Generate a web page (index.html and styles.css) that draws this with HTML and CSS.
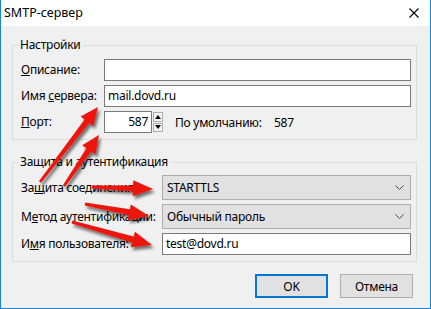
FILE: index.html
```html
<!DOCTYPE html>
<html lang="ru">

<head>
    <meta charset="utf-8">
    <title>SMTP-сервер</title>
    <link rel="stylesheet" href="styles.css">
</head>

<body>
    <div class="window">
        <!--TITELLINJE-->
        <div class="titlebar">
            <span class="title">SMTP-сервер</span>
            <svg class="close" width="10" height="10" viewBox="0 0 10 10">
                <path d="M0.5 0.5 L9.5 9.5 M9.5 0.5 L0.5 9.5" stroke="#000" stroke-width="1.1" fill="none" />
            </svg>
        </div>

        <div class="content">
            <fieldset class="group group-settings">
                <legend>Настройки</legend>
                <div class="row">
                    <label><u>О</u>писание:</label>
                    <div class="input"></div>
                </div>
                <div class="row">
                    <label>Имя <u>с</u>ервера:</label>
                    <div class="input">mail.dovd.ru</div>
                </div>
                <div class="row">
                    <label><u>П</u>орт:</label>
                    <div class="input port">587</div>
                    <div class="spin">
                        <span class="spin-btn"><i class="tri up"></i></span>
                        <span class="spin-btn"><i class="tri down"></i></span>
                    </div>
                    <span class="default-label">По умолчанию:</span>
                    <span>587</span>
                </div>
            </fieldset>

            <fieldset class="group group-security">
                <legend>Защита и аутентификация</legend>
                <div class="row row-select">
                    <label>За<u>щ</u>ита соединения:</label>
                    <div class="select">STARTTLS
                        <svg class="chevron" width="9" height="5" viewBox="0 0 9 5">
                            <path d="M0.5 0.5 L4.5 4.5 L8.5 0.5" stroke="#444" fill="none" />
                        </svg>
                    </div>
                </div>
                <div class="row row-select">
                    <label>М<u>е</u>тод аутентификации:</label>
                    <div class="select">Обычный пароль
                        <svg class="chevron" width="9" height="5" viewBox="0 0 9 5">
                            <path d="M0.5 0.5 L4.5 4.5 L8.5 0.5" stroke="#444" fill="none" />
                        </svg>
                    </div>
                </div>
                <div class="row">
                    <label>И<u>м</u>я пользователя:</label>
                    <div class="input">test@dovd.ru</div>
                </div>
            </fieldset>

            <div class="buttons">
                <button class="btn btn-default">OK</button>
                <button class="btn">Отмена</button>
            </div>
        </div>

        <!--ROEDE PILE OVENPAA DIALOGEN-->
        <svg class="arrows" width="431" height="309" viewBox="0 0 431 309">
            <defs>
                <filter id="skygge" x="-20%" y="-20%" width="140%" height="140%">
                    <feDropShadow dx="2" dy="3" stdDeviation="1.8" flood-color="#000" flood-opacity="0.55" />
                </filter>
            </defs>
            <g fill="#ec1410" filter="url(#skygge)">
                <polygon points="38.9,181.2 84.6,119.4 80.6,116.4 98,107 93.3,126.1 89.3,123.1 41.1,182.8" />
                <polygon points="62.9,185.2 86.4,148.2 82.2,145.3 99,135 95.4,154.4 91.2,151.5 65.1,186.8" />
                <polygon points="92,185.6 133.1,185.4 133.2,180.3 153,189 132.8,196.3 132.9,191.3 92,188.4" />
                <polygon points="85.3,202.6 129.9,209.3 130.8,204.4 149,216 127.9,220.2 128.8,215.3 84.7,205.4" />
                <polygon points="72.4,220.6 133.6,236.6 134.9,231.8 152,245 130.7,247.2 132,242.4 71.6,223.4" />
            </g>
        </svg>
    </div>
</body>

</html>
```

FILE: styles.css
```css
/*GENERELT*/
* {
    margin: 0;
    padding: 0;
    box-sizing: border-box;
}

body {
    margin: 0;
    background: #fff;
    font-family: 'Noto Sans', 'Open Sans', sans-serif;
    font-size: 12px;
    letter-spacing: -0.25px;
    color: #000;
}

/*GENERELT SLUT*/

.window {
    position: relative;
    width: 431px;
    height: 309px;
    background: #f0f0f0;
    border: 1px solid #1883d7;
    border-top: none;
    overflow: hidden;
}

/*TITELLINJE*/
.titlebar {
    display: flex;
    align-items: center;
    justify-content: space-between;
    height: 26px;
    padding: 0 11px 0 3px;
    background: #fff;
}

.title {
    font-size: 12.5px;
    letter-spacing: 0;
    line-height: 16px;
}

.close {
    display: block;
    margin-top: -1px;
}

/*INDHOLD*/
.content {
    display: flex;
    flex-direction: column;
}

.group {
    border: 1px solid #dcdcdc;
    margin: 0 13px 0 11px;
    padding: 6px 5px 6px 8px;
    display: flex;
    flex-direction: column;
    gap: 4px;
}

.group legend {
    margin-left: -3px;
    padding: 0 2px;
    line-height: 16px;
    height: 16px;
}

.group-settings {
    margin-top: 11px;
}

.group-security {
    margin-top: 14px;
    padding-top: 5px;
    padding-bottom: 6px;
}

.row {
    display: flex;
    align-items: center;
    height: 22px;
}

.row-select {
    height: 25px;
}

.row label {
    flex: none;
    width: 83px;
    line-height: 16px;
}

.group-security .row label {
    width: 141px;
}

.input {
    flex: 1;
    height: 100%;
    background: #fff;
    border: 1px solid #7a7a7a;
    padding: 0 3px;
    line-height: 20px;
}

.input.port {
    flex: none;
    width: 48px;
    text-align: right;
}

/*SPINNER*/
.spin {
    display: flex;
    flex-direction: column;
    gap: 1px;
    width: 10px;
    height: 20px;
    margin-left: 1px;
}

.spin-btn {
    flex: 1;
    display: flex;
    align-items: center;
    justify-content: center;
    background: #f4f4f4;
    border: 1px solid #adadad;
}

.tri {
    width: 0;
    height: 0;
    border-left: 3px solid transparent;
    border-right: 3px solid transparent;
}

.tri.up {
    border-bottom: 4px solid #000;
}

.tri.down {
    border-top: 4px solid #000;
}

.default-label {
    margin-left: 12px;
    width: 99px;
}

/*DROPDOWN*/
.select {
    flex: 1;
    height: 100%;
    display: flex;
    align-items: center;
    justify-content: space-between;
    background: #e1e1e1;
    border: 1px solid #adadad;
    padding: 0 6px 0 4px;
}

.chevron {
    display: block;
}

/*KNAPPER*/
.buttons {
    display: flex;
    justify-content: flex-end;
    gap: 12px;
    margin: 12px 17px 0 0;
}

.btn {
    width: 73px;
    height: 24px;
    background: #e1e1e1;
    border: 1px solid #adadad;
    font-family: inherit;
    font-size: 12px;
    letter-spacing: inherit;
    color: #000;
}

.btn-default {
    border: 2px solid #0078d7;
}

/*PILE*/
.arrows {
    position: absolute;
    top: 0;
    left: -1px;
    pointer-events: none;
}
```
